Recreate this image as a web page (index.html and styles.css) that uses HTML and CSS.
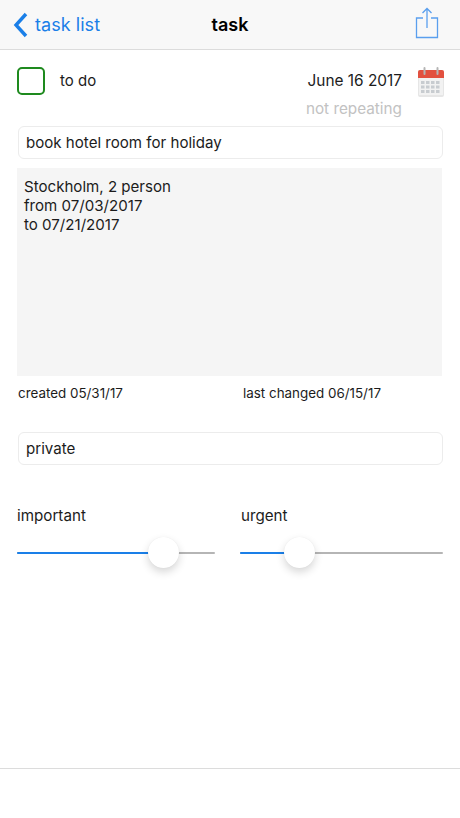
FILE: index.html
```html
<!DOCTYPE html>
<html lang="en">
<head>
<meta charset="utf-8">
<title>task</title>
<link rel="stylesheet" href="styles.css">
</head>
<body>
<div class="page">
  <header class="nav">
    <a class="back">
      <svg class="back-icon" width="16" height="26" viewBox="0 0 16 26"><path d="M13 2 3 13l10 11" fill="none" stroke="#1a7fe8" stroke-width="3.4"/></svg>
      <span>task list</span>
    </a>
    <h1 class="title">task</h1>
    <svg class="share" width="24" height="32" viewBox="0 0 24 32"><path d="M8 11H1.500v19.500h21V11H16M12 21V1.500M7.500 6 12 1.500 16.500 6" fill="none" stroke="#5a9fee" stroke-width="1.3"/></svg>
  </header>
  <main class="content">
    <section class="status">
      <div class="check"></div>
      <span class="todo">to do</span>
      <div class="dates">
        <div class="date">June 16 2017</div>
        <div class="repeat">not repeating</div>
      </div>
      <svg class="cal" width="26" height="30" viewBox="0 0 26 30">
        <rect x="0" y="3" width="26" height="27" rx="2" fill="#e6e6e6"/>
        <path d="M0 11V5a2 2 0 0 1 2-2h22a2 2 0 0 1 2 2v6z" fill="#e2503f"/>
        <rect x="1" y="11" width="24" height="17" fill="#f2f2f2"/>
        <path d="M6.500 1v6M19.500 1v6" stroke="#b5b5b5" stroke-width="2" stroke-linecap="round"/>
        <g fill="#c8ccd0">
          <rect x="3" y="14" width="3.500" height="3"/><rect x="8" y="14" width="3.500" height="3"/><rect x="13" y="14" width="3.500" height="3"/><rect x="18" y="14" width="3.500" height="3"/>
          <rect x="3" y="18.500" width="3.500" height="3"/><rect x="8" y="18.500" width="3.500" height="3"/><rect x="13" y="18.500" width="3.500" height="3"/><rect x="18" y="18.500" width="3.500" height="3"/>
          <rect x="3" y="23" width="3.500" height="3"/><rect x="8" y="23" width="3.500" height="3"/><rect x="13" y="23" width="3.500" height="3"/><rect x="18" y="23" width="3.500" height="3"/>
        </g>
      </svg>
    </section>
    <div class="field title-field">book hotel room for holiday</div>
    <div class="notes">Stockholm, 2 person<br>from 07/03/2017<br>to 07/21/2017</div>
    <div class="meta">
      <span class="created">created 05/31/17</span>
      <span>last changed 06/15/17</span>
    </div>
    <div class="field category">private</div>
    <section class="sliders">
      <div class="slider-box first">
        <div class="slider-label">important</div>
        <div class="track">
          <div class="fill" style="width:146px"></div>
          <div class="thumb"></div>
        </div>
      </div>
      <div class="slider-box second">
        <div class="slider-label">urgent</div>
        <div class="track">
          <div class="fill" style="width:59px"></div>
          <div class="thumb"></div>
        </div>
      </div>
    </section>
  </main>
  <footer class="foot"></footer>
</div>
</body>
</html>
```
FILE: styles.css
```css
* { box-sizing: border-box; }
html, body { margin: 0; padding: 0; background: #fff; }
body { font-family: Inter, "Liberation Sans", sans-serif; color: #1c1c1c; }
.page { width: 460px; height: 818px; display: flex; flex-direction: column; overflow: hidden; }

.nav { height: 50px; flex: none; background: #f8f8f8; border-bottom: 1px solid #dcdcdc; display: flex; align-items: center; justify-content: space-between; padding: 0 21px 0 13px; position: relative; }
.back { display: flex; align-items: center; gap: 6px; color: #1a7fe8; font-size: 18px; letter-spacing: .05px; }
.title { position: absolute; left: 0; right: 0; margin: 0; text-align: center; font-size: 18px; font-weight: 600; color: #000; pointer-events: none; }
.share { margin-bottom: 4px; }

.content { flex: 1; padding: 0 17px; }
.status { display: flex; align-items: flex-start; height: 76px; padding-top: 17px; }
.check { width: 28px; height: 28px; border: 2px solid #1e8a1e; border-radius: 5px; flex: none; }
.todo { margin-left: 15px; font-size: 15px; line-height: 28px; }
.dates { margin-left: auto; text-align: right; margin-right: 16px; padding-top: 4px; }
.date { font-size: 15.400px; line-height: 20px; }
.repeat { font-size: 15.300px; line-height: 20px; margin-top: 8px; color: #c2c2c2; }
.cal { margin-right: -1px; flex: none; }

.field { margin-left: 1px; width: 425px; height: 33px; border: 1px solid #ececec; border-radius: 6px; padding: 0 7px; font-size: 15.100px; line-height: 31px; }
.notes { margin-top: 9px; width: 425px; height: 208px; background: #f5f5f5; padding: 10px 7px 9px; font-size: 15.100px; line-height: 18.800px; }
.meta { display: flex; height: 56px; padding: 8px 0 0 1px; font-size: 13.400px; line-height: 18px; }
.created { width: 225px; }

.sliders { display: flex; margin-top: 41px; }
.slider-label { font-size: 15.200px; line-height: 20px; }
.slider-box.first { width: 198px; }
.slider-box.second { width: 203px; margin-left: 25px; }
.second .slider-label { padding-left: 1px; }
.track { position: relative; margin-top: 26px; height: 2px; background: #b5b5b5; border-radius: 1px; }
.fill { height: 2px; background: #1a7fe8; border-radius: 1px; }
.thumb { position: absolute; top: -15px; width: 31px; height: 31px; border-radius: 50%; background: #fff; box-shadow: 0 4px 8px rgba(0,0,0,.16), 0 0 1px rgba(0,0,0,.08); }
.first .thumb { left: 131px; }
.second .thumb { left: 44px; }

.foot { height: 50px; flex: none; border-top: 1px solid #dcdcdc; background: #fff; }
```
